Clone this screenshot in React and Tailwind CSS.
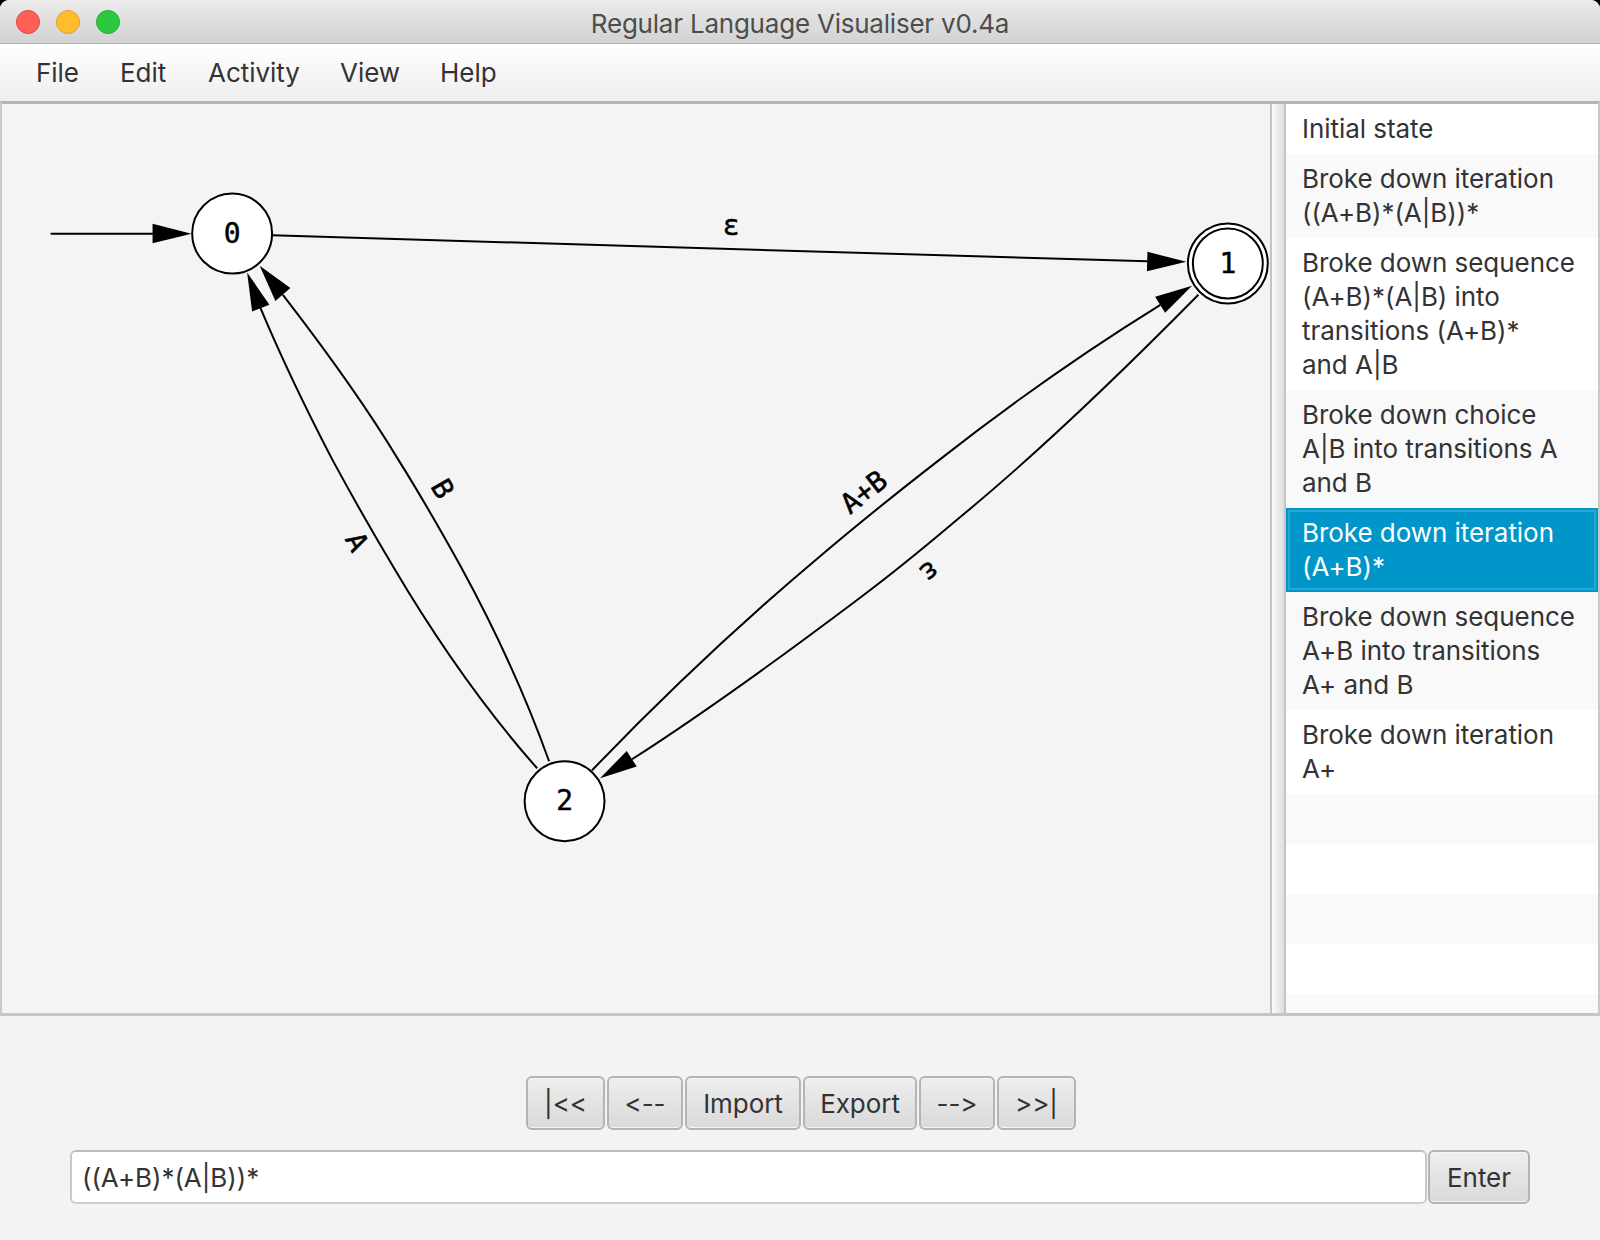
const menus = [
  { label: "File", width: "w-[84px]" },
  { label: "Edit", width: "w-[88px]" },
  { label: "Activity", width: "w-[132px]" },
  { label: "View", width: "w-[100px]" },
  { label: "Help", width: "w-[80px]" },
];

const steps = [
  { lines: ["Initial state"] },
  { lines: ["Broke down iteration", "((A+B)*(A|B))*"] },
  { lines: ["Broke down sequence", "(A+B)*(A|B) into", "transitions (A+B)*", "and A|B"] },
  { lines: ["Broke down choice", "A|B into transitions A", "and B"] },
  { lines: ["Broke down iteration", "(A+B)*"], selected: true },
  { lines: ["Broke down sequence", "A+B into transitions", "A+ and B"] },
  { lines: ["Broke down iteration", "A+"] },
];

const buttons = [
  { label: "|<<", width: "w-[79px]" },
  { label: "<--", width: "w-[76px]" },
  { label: "Import", width: "w-[116px]" },
  { label: "Export", width: "w-[114px]" },
  { label: "-->", width: "w-[76px]" },
  { label: ">>|", width: "w-[79px]" },
];

const edges = [
  "M50,234 L153,234",
  "M272,235.5 L1148,261.5",
  "M537,769 C485,710 436,640 394,569 C373,534 352,497 332,460 C305,408 281,358 260,308",
  "M549,762 C525,695 495,630 460,566 C440,530 420,495 398,460 C365,405 325,350 282.5,295",
  "M592,771 C665,695 745,620 820,557 C860,523 900,491 940,460 C1010,405 1085,352 1161,305",
  "M1199,295 C1125,370 1045,448 960,518 C927,546 893,574 858,600 C785,655 710,710 632,760",
];

const arrowheads = [
  "191,234 152,224 152,243.5",
  "1187,262 1148,252 1147.5,271.5",
  "246.7,272.7 251.7,311.7 269,305",
  "259.3,266 275,301.3 290,288.3",
  "1192.7,286 1155.7,297 1165.7,313",
  "600,779 626.7,751.7 636.7,767.3",
];

const edgeLabels = [
  { text: "ε", x: 731, y: 235, rotate: 1.7 },
  { text: "A", x: 348, y: 547, rotate: 62 },
  { text: "B", x: 434, y: 494, rotate: 60 },
  { text: "A+B", x: 870, y: 500, rotate: -38 },
  { text: "ε", x: 924, y: 565, rotate: 141 },
];

function StateNode({ x, y, label, accepting }) {
  return (
    <g>
      <circle cx={x} cy={y} r="40" fill="#fff" stroke="#000" strokeWidth="2" />
      {accepting && <circle cx={x} cy={y} r="35" fill="#fff" stroke="#000" strokeWidth="2" />}
      <text
        x={x}
        y={y + 9}
        textAnchor="middle"
        stroke="#000"
        strokeWidth="0.5"
        className="font-['DejaVu_Sans_Mono',monospace] text-[28px]"
        fill="#000"
      >
        {label}
      </text>
    </g>
  );
}

function Graph() {
  return (
    <svg viewBox="2 104 1268 910" className="block h-full w-full">
      {edges.map((d) => (
        <path key={d} d={d} fill="none" stroke="#000" strokeWidth="2" />
      ))}
      {arrowheads.map((points) => (
        <polygon key={points} points={points} fill="#000" />
      ))}
      {edgeLabels.map((l) => (
        <text
          key={l.x}
          x={l.x}
          y={l.y}
          textAnchor="middle"
          transform={`rotate(${l.rotate} ${l.x} ${l.y})`}
          stroke="#000"
          strokeWidth="0.5"
          className="font-['DejaVu_Sans_Mono',monospace] text-[28px]"
          fill="#000"
        >
          {l.text}
        </text>
      ))}
      <StateNode x={231.7} y={233.7} label="0" />
      <StateNode x={1228.5} y={263.7} label="1" accepting />
      <StateNode x={564.5} y={802} label="2" />
    </svg>
  );
}

function UiButton({ label, className }) {
  return (
    <button className={`flex h-[54px] items-center justify-center rounded-[6px] border-2 border-[#b4b4b4] bg-gradient-to-b from-[#eeeeee] to-[#d9d9d9] text-[26px] text-[#333333] shadow-[inset_0_-1px_0_#f4f4f4,inset_0_1px_0_#f6f6f6] ${className}`}>
      {label}
    </button>
  );
}

export default function App() {
  return (
    <div className="h-[1240px] w-[1600px] overflow-hidden bg-black font-['Inter',sans-serif] tracking-[-0.05px] [font-feature-settings:'calt'_0,'liga'_0]">
      <div className="flex h-full flex-col overflow-hidden rounded-t-[9px] bg-[#f3f3f3]">
        {/* Title bar */}
        <div className="relative flex h-[44px] shrink-0 items-center justify-center border-b border-[#b1b1b1] bg-gradient-to-b from-[#ebebeb] to-[#d2d2d2] pt-[3px]">
          <div className="absolute left-[16px] top-[10px] flex gap-[16px]">
            <span className="h-[24px] w-[24px] rounded-full border border-[#e2463f] bg-[#ff5f57]" />
            <span className="h-[24px] w-[24px] rounded-full border border-[#e1a02c] bg-[#ffbd2e]" />
            <span className="h-[24px] w-[24px] rounded-full border border-[#27aa35] bg-[#2ac940]" />
          </div>
          <span className="text-[26px] tracking-[-0.22px] text-[#4d4d4d]">Regular Language Visualiser v0.4a</span>
        </div>

        {/* Menu bar */}
        <div className="flex h-[57px] shrink-0 items-center bg-gradient-to-b from-[#ffffff] to-[#eeeeee] pl-[36px] text-[26px] text-[#333333]">
          {menus.map((m) => (
            <span key={m.label} className={m.width}>
              {m.label}
            </span>
          ))}
        </div>

        {/* Graph and steps */}
        <div className="flex h-[915px] shrink-0 border-y-[3px] border-t-[#b5b5b5] border-b-[#c4c4c4] border-x-2 border-x-[#c8c8c8]">
          <div className="w-[1268px] bg-[#f4f4f4]">
            <Graph />
          </div>
          <div className="w-[16px] border-x-2 border-[#c4c4c4] bg-gradient-to-r from-[#fbfbfb] to-[#dedede]" />
          <div className="flex min-w-0 flex-1 flex-col overflow-hidden bg-white text-[26px] leading-[34px] text-[#333333]">
            {steps.map((step, i) => (
              <div
                key={step.lines.join()}
                className={
                  step.selected
                    ? "bg-[#0096c9] px-[16px] py-[8px] text-white shadow-[inset_0_0_0_2px_#0096c9,inset_0_0_0_4px_#2aa8d4]"
                    : i % 2
                      ? "bg-[#f9f9f9] px-[16px] py-[8px]"
                      : "bg-white px-[16px] py-[8px]"
                }
              >
                {step.lines.map((line) => (
                  <div key={line} className="whitespace-nowrap">
                    {line}
                  </div>
                ))}
              </div>
            ))}
            <div className="h-[50px] shrink-0 bg-[#f9f9f9]" />
            <div className="h-[50px] shrink-0 bg-white" />
            <div className="h-[50px] shrink-0 bg-[#f9f9f9]" />
            <div className="h-[50px] shrink-0 bg-white" />
            <div className="flex-1 bg-[#f9f9f9]" />
          </div>
        </div>

        {/* Controls */}
        <div className="flex flex-1 flex-col items-center pt-[60px]">
          <div className="ml-[2px] flex gap-[2px]">
            {buttons.map((b) => (
              <UiButton key={b.label} label={b.label} className={b.width} />
            ))}
          </div>
          <div className="mt-[20px] flex w-full items-stretch gap-[1px] pl-[70px] pr-[70px]">
            <div className="flex h-[54px] flex-1 items-center rounded-[6px] border-2 border-t-[#bdbdbd] border-x-[#c8c8c8] border-b-[#cfcfcf] bg-white pl-[10px] text-[26px] text-[#333333]">
              ((A+B)*(A|B))*
            </div>
            <UiButton label="Enter" className="w-[102px]" />
          </div>
        </div>
      </div>
    </div>
  );
}
